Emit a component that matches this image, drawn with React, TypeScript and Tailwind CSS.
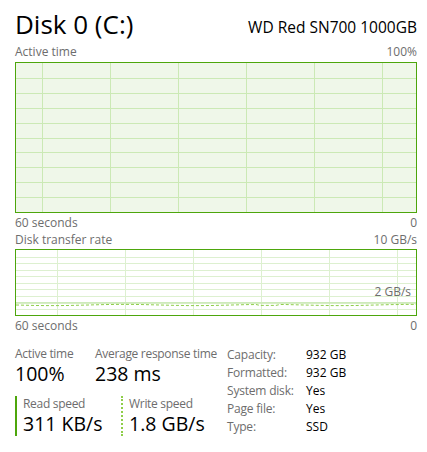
import React from 'react'

const font = { fontFamily: '"Segoe UI", "Open Sans", "Noto Sans", sans-serif' }

function Grid({ width, height, cols, rows, offset, color }: { width: number; height: number; cols: number; rows: number; offset: number; color: string }) {
  const xs: number[] = []
  for (let x = offset; x < width; x += cols) xs.push(x)
  const ys: number[] = []
  for (let i = 1; i < rows; i++) ys.push(Math.round((height * i) / rows) + 0.5)
  return (
    <svg width={width} height={height} className="absolute inset-0">
      {ys.map((y) => (
        <line key={'h' + y} x1={0} x2={width} y1={y} y2={y} stroke={color} strokeWidth={1} />
      ))}
      {xs.map((x) => (
        <line key={'v' + x} x1={x + 0.5} x2={x + 0.5} y1={0} y2={height} stroke={color} strokeWidth={1} />
      ))}
    </svg>
  )
}

function WriteLine() {
  // wavy dashed line for write speed
  const pts: string[] = []
  for (let x = 0; x <= 400; x += 4) {
    const y = 55 + Math.sin(x / 23) * 0.6 + (x > 240 && x < 262 ? 1 : 0)
    pts.push(`${x},${y.toFixed(1)}`)
  }
  return (
    <svg width={400} height={65} className="absolute inset-0">
      <line x1={0} x2={400} y1={53} y2={53} stroke="#c9e8b3" strokeWidth={1.5} />
      <polyline points={pts.join(' ')} fill="none" stroke="#8fce4a" strokeWidth={1} strokeDasharray="3 2" />
    </svg>
  )
}

function Stat({ label, value, className }: { label: string; value: string; className?: string }) {
  return (
    <div className={'flex flex-col whitespace-nowrap ' + (className ?? '')}>
      <span className="text-[12px] tracking-[-0.3px] leading-[16px] text-[#6d6d6d]">{label}</span>
      <span className="text-[19.5px] leading-[24px] text-black">{value}</span>
    </div>
  )
}

function Speed({ label, value, className }: { label: string; value: string; className: string }) {
  return (
    <div className={'flex flex-col whitespace-nowrap border-l-2 pl-[6px] ' + className}>
      <span className="text-[12px] tracking-[-0.3px] leading-[16px] text-[#6d6d6d]">{label}</span>
      <span className="text-[19.5px] leading-[24px] text-black">{value}</span>
    </div>
  )
}

export default function App() {
  const props: [string, string][] = [
    ['Capacity:', '932 GB'],
    ['Formatted:', '932 GB'],
    ['System disk:', 'Yes'],
    ['Page file:', 'Yes'],
    ['Type:', 'SSD'],
  ]

  return (
    <div className="w-[427px] h-[452px] bg-white pl-[15px] pr-[10px] pt-[8px]" style={font}>
      <div className="flex items-end justify-between h-[32px]">
        <span className="text-[26px] leading-[32px] text-black">Disk 0 (C:)</span>
        <span className="text-[15.5px] leading-[22px] text-black pb-[2px]">WD Red SN700 1000GB</span>
      </div>

      <div className="flex justify-between text-[12px] leading-[16px] text-[#6d6d6d] mt-[4px]">
        <span>Active time</span>
        <span>100%</span>
      </div>
      <div className="relative mt-[2px] h-[151px] border border-[#4da60c] bg-[#eff7e9]">
        <Grid width={400} height={149} cols={68} rows={10} offset={26} color="#cbe9b5" />
      </div>
      <div className="flex justify-between text-[12px] leading-[16px] text-[#6d6d6d] mt-[2px]">
        <span>60 seconds</span>
        <span>0</span>
      </div>

      <div className="flex justify-between text-[12px] leading-[16px] text-[#6d6d6d] mt-[1px]">
        <span>Disk transfer rate</span>
        <span>10 GB/s</span>
      </div>
      <div className="relative mt-[1px] h-[67px] border border-[#4da60c] bg-white">
        <Grid width={400} height={65} cols={68} rows={10} offset={41} color="#ddf0d0" />
        <WriteLine />
        <span className="absolute right-[5px] top-[35px] text-[12px] leading-[14px] text-[#6d6d6d]">2 GB/s</span>
      </div>
      <div className="flex justify-between text-[12px] leading-[16px] text-[#6d6d6d] mt-[2px]">
        <span>60 seconds</span>
        <span>0</span>
      </div>

      <div className="flex mt-[12px]">
        <div className="flex flex-col w-[212px]">
          <div className="flex">
            <Stat label="Active time" value="100%" className="w-[80px]" />
            <Stat label="Average response time" value="238 ms" />
          </div>
          <div className="flex mt-[10px]">
            <Speed label="Read speed" value="311 KB/s" className="border-[#4da60c] w-[106px]" />
            <Speed label="Write speed" value="1.8 GB/s" className="border-dotted border-[#8fce4a]" />
          </div>
        </div>
        <div className="grid grid-cols-[79px_auto] text-[12px] leading-[17.7px] whitespace-nowrap">
          {props.map(([k, v]) => (
            <React.Fragment key={k}>
              <span className="text-[#6d6d6d] tracking-[-0.2px]">{k}</span>
              <span className="text-black">{v}</span>
            </React.Fragment>
          ))}
        </div>
      </div>
    </div>
  )
}
